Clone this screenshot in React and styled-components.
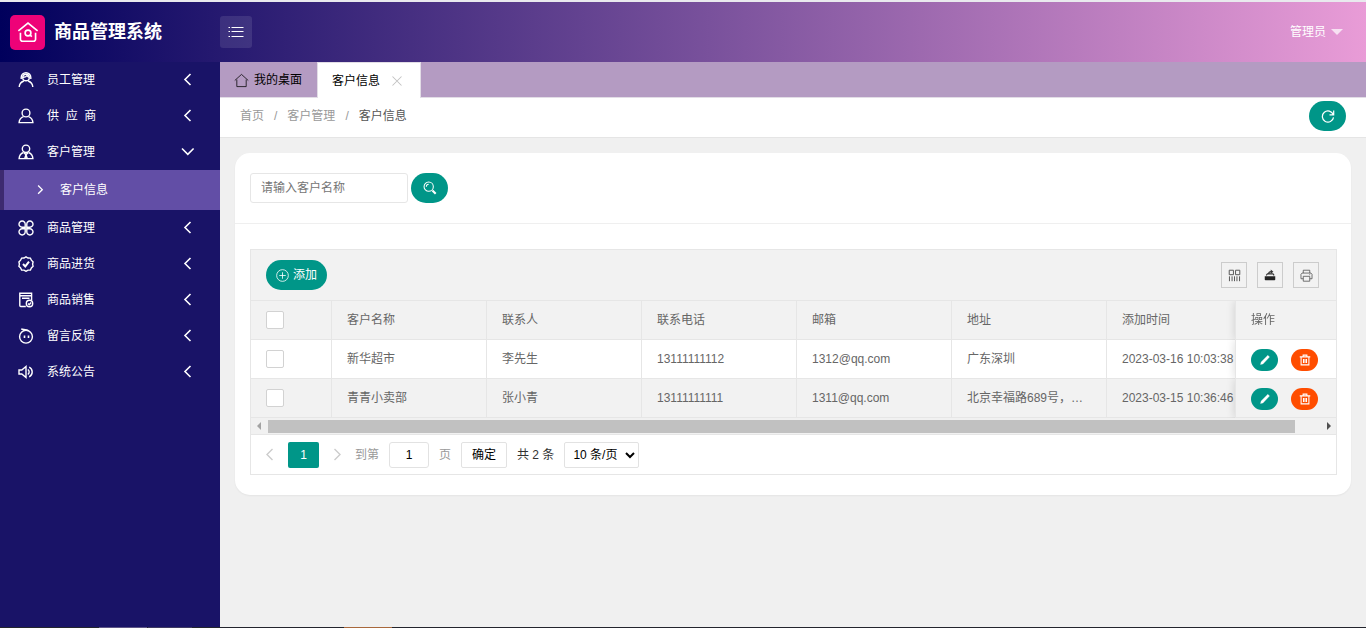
import React, { useState } from "react";
import styled, { createGlobalStyle, css } from "styled-components";

const GlobalStyle = createGlobalStyle`
  * {
    box-sizing: border-box;
  }

  body {
    margin: 0;
    font-family: "Liberation Sans", "Noto Sans CJK SC", sans-serif;
    font-size: 12px;
    line-height: 20px;
    color: #666;
    background: #f0f0f0;
  }

  button, input, select {
    font: inherit;
    margin: 0;
  }

  a {
    color: inherit;
    text-decoration: none;
  }
`;

const Page = styled.div`
  display: flex;
  flex-direction: column;
  min-height: 100vh;
  border-top: 2px solid #e9e9ee;
`;

const Header = styled.header`
  display: flex;
  align-items: center;
  height: 60px;
  padding-right: 23px;
  background: linear-gradient(to right, #00005c, #e99cd7);
`;

const Logo = styled.a`
  display: flex;
  align-items: center;
  gap: 9px;
  width: 220px;
  padding-left: 10px;
  font-size: 18px;
  font-weight: bold;
  color: #fff;
`;

const LogoMark = styled.span`
  display: flex;
  align-items: center;
  justify-content: center;
  width: 35px;
  height: 35px;
  border-radius: 5px;
  background: #ee0278;
`;

const FoldButton = styled.button`
  display: flex;
  align-items: center;
  justify-content: center;
  width: 32px;
  height: 32px;
  padding: 0;
  border: none;
  border-radius: 3px;
  color: #fff;
  background: rgba(255, 255, 255, 0.1);
  cursor: pointer;
`;

const UserButton = styled.button`
  display: flex;
  align-items: center;
  gap: 5px;
  margin-left: auto;
  padding: 0;
  border: none;
  color: #fff;
  background: none;
  cursor: pointer;

  &::after {
    content: "";
    border: 6px solid transparent;
    border-top-color: rgba(255, 255, 255, 0.7);
    border-bottom: none;
  }
`;

const Body = styled.div`
  display: flex;
  flex: 1;
`;

const Sidebar = styled.nav`
  width: 220px;
  flex: none;
  background: #191367;
`;

const MenuItem = styled.button`
  display: flex;
  align-items: center;
  width: 100%;
  height: 36px;
  padding: 0 24px 0 18px;
  border: none;
  color: #fff;
  background: none;
  cursor: pointer;

  span {
    flex: 1;
    padding-left: 13px;
    text-align: left;
    white-space: pre;
  }
`;

const SubItem = styled.a`
  display: flex;
  align-items: center;
  gap: 14px;
  height: 40px;
  padding-left: 30px;
  border-left: 4px solid #3d2a70;
  color: #fff;
  background: #624ea6;
`;

const Main = styled.main`
  flex: 1;
  min-width: 0;
`;

const TabBar = styled.div`
  display: flex;
  height: 36px;
  border-bottom: 1px solid #e2dde6;
  background: #b49bc2;
`;

const Tab = styled.div`
  display: flex;
  align-items: center;
  gap: 5px;
  height: 36px;
  padding: 0 15px 0 14px;
  color: #000;

  ${({ $active }) => $active && css`
    gap: 11px;
    padding-right: 17px;
    border: 1px solid #e2dde6;
    border-bottom: none;
    background: #fff;
  `}
`;

const TabClose = styled.button`
  display: flex;
  padding: 0;
  border: none;
  color: #c2c2c2;
  background: none;
  cursor: pointer;
`;

const Crumbs = styled.div`
  display: flex;
  align-items: center;
  gap: 10px;
  height: 40px;
  padding: 0 20px 3px;
  border-bottom: 1px solid #e5e5e5;
  color: #999;
  background: #fff;

  b {
    font-weight: normal;
    color: #555;
  }
`;

const RoundButton = styled.button`
  display: flex;
  align-items: center;
  justify-content: center;
  gap: 4px;
  min-width: ${({ $small }) => ($small ? "27px" : "37px")};
  height: ${({ $small }) => ($small ? "22px" : "30px")};
  padding: 0 ${({ $small }) => ($small ? "7px" : "10px")};
  border: none;
  border-radius: 15px;
  color: #fff;
  background: ${({ $danger }) => ($danger ? "#ff4d00" : "#009688")};
  cursor: pointer;
`;

const RefreshButton = styled(RoundButton)`
  margin-left: auto;
`;

const Card = styled.section`
  margin: 15px;
  border-radius: 15px;
  background: #fff;
  box-shadow: 0 1px 2px rgba(0, 0, 0, 0.05);
`;

const SearchForm = styled.form`
  display: flex;
  gap: 3px;
  padding: 20px 15px;
  border-bottom: 1px solid #efefef;
`;

const SearchInput = styled.input`
  width: 158px;
  height: 30px;
  padding: 0 10px;
  border: 1px solid #e6e6e6;
  border-radius: 3px;
  outline: none;
  background: #fff;

  &::placeholder {
    color: #757575;
  }
`;

const CardBody = styled.div`
  padding: 25px 14px 20px 15px;
`;

const TableBox = styled.div`
  border: 1px solid #e6e6e6;
`;

const Toolbar = styled.div`
  display: flex;
  align-items: center;
  gap: 10px;
  height: 51px;
  padding: 0 17px 0 15px;
  border-bottom: 1px solid #e6e6e6;
  background: #f2f2f2;
`;

const Tools = styled.div`
  display: flex;
  gap: 10px;
  margin-left: auto;
`;

const ToolButton = styled.button`
  display: flex;
  align-items: center;
  justify-content: center;
  width: 26px;
  height: 26px;
  padding: 0;
  border: 1px solid #ccc;
  color: #555;
  background: none;
  cursor: pointer;
`;

const TableScroll = styled.div`
  overflow: hidden;
`;

const Table = styled.table`
  width: 1112px;
  min-width: 100%;
  table-layout: fixed;
  border-collapse: separate;
  border-spacing: 0;

  th, td {
    height: 39px;
    padding: 0 15px;
    border-right: 1px solid #e6e6e6;
    border-bottom: 1px solid #e6e6e6;
    background: #fff;
    font-weight: normal;
    text-align: left;
    white-space: nowrap;
    overflow: hidden;
    text-overflow: ellipsis;
  }

  th, tr:nth-child(even) td {
    background: #f2f2f2;
  }

  th:nth-last-child(2), td:nth-last-child(2) {
    padding-right: 0;
  }

  th:last-child, td:last-child {
    position: sticky;
    right: 0;
    border-right: none;
    border-left: 1px solid #e6e6e6;
    box-shadow: -1px 0 8px rgba(0, 0, 0, 0.12);
    clip-path: inset(0 0 0 -10px);
  }
`;

const Check = styled.input`
  display: block;
  appearance: none;
  width: 18px;
  height: 18px;
  border: 1px solid #d2d2d2;
  border-radius: 2px;
  background: #fff;

  &:checked {
    border-color: #009688;
    background: #009688;
  }
`;

const RowActions = styled.div`
  display: flex;
  gap: 13px;
  padding-top: 2px;
`;

const ScrollTrack = styled.div`
  display: flex;
  align-items: center;
  height: 17px;
  padding: 0 5px 0 6px;
  border-bottom: 1px solid #e6e6e6;
  background: #f1f1f1;
`;

const ScrollThumb = styled.div`
  flex: 1;
  height: 13px;
  margin: 0 32px 0 7px;
  background: #c1c1c1;
`;

const Arrow = styled.span`
  border: 4px solid transparent;
  ${({ $left }) => ($left
    ? "border-right-color: #a3a3a3; border-left: none;"
    : "border-left-color: #505050; border-right: none;")}
`;

const Pager = styled.div`
  display: flex;
  align-items: center;
  height: 39px;
  padding-left: 11px;
  color: #999;
`;

const PageArrow = styled.button`
  display: flex;
  padding: 0;
  border: none;
  color: #ccc;
  background: none;
`;

const PageCurrent = styled.button`
  width: 31px;
  height: 26px;
  margin: 0 10px;
  padding: 0;
  border: none;
  border-radius: 2px;
  color: #fff;
  background: #009688;
`;

const JumpLabel = styled.label`
  display: flex;
  align-items: center;
  gap: 10px;
  margin: 0 10px;
`;

const JumpInput = styled.input`
  width: 40px;
  height: 26px;
  padding: 0;
  border: 1px solid #e2e2e2;
  border-radius: 3px;
  color: #000;
  text-align: center;
`;

const JumpButton = styled.button`
  width: 46px;
  height: 26px;
  padding: 0;
  border: 1px solid #e2e2e2;
  border-radius: 2px;
  color: #000;
  background: #fff;
`;

const Total = styled.span`
  margin: 0 10px;
  color: #333;
`;

const SizeSelect = styled.select`
  width: 75px;
  height: 26px;
  padding: 0 0 0 4px;
  border: 1px solid #e2e2e2;
  border-radius: 2px;
  color: #000;
  background: #fff;
`;

const BottomStrip = styled.div`
  height: 1px;
  background: linear-gradient(
    to right,
    #23252d 99px, #5e5686 99px 147px, #23252d 147px 148px, #3f3b62 148px 192px,
    #23252d 192px 344px, #a8683c 344px 392px, #23252d 392px
  );
`;

// 16 unit line icons
const icons = {
  staff: (
    <>
      <circle cx="8" cy="5.5" r="3.300" />
      <path d="M3.200 7V5.500a4.800 4.800 0 0 1 9.600 0V7" />
      <path d="M4.800 5.200c2 .2 3.600-.5 4.200-1.700.5 1 1.300 1.600 2.300 1.700" />
      <path d="M1.200 15c.2-3.200 1.900-5 4.600-6M14.800 15c-.2-3.200-1.900-5-4.600-6" />
    </>
  ),
  user: (
    <>
      <circle cx="8" cy="5" r="3.900" />
      <path d="M5.500 8.600C3 9.400 1.300 11.500 1.100 14.600h13.800c-.2-3.100-1.900-5.200-4.400-6" />
    </>
  ),
  customer: (
    <>
      <circle cx="8" cy="4.800" r="3.700" />
      <path d="M5.500 8.500C3 9.400 1.300 11.500 1.100 14.600h13.800c-.2-3.100-1.900-5.200-4.400-6.100" />
      <path d="M6 8.800l2 2 2-2M8 10.800l-1.200 3.500h2.400z" />
    </>
  ),
  goods: (
    <>
      <path d="M7.200 7.200H4.200a3.100 3.100 0 1 1 3-3z" />
      <path d="M8.800 7.200h3a3.100 3.100 0 1 0-3-3z" />
      <path d="M7.200 8.800H4.200a3.100 3.100 0 1 0 3 3z" />
      <path d="M8.800 8.800h3a3.100 3.100 0 1 1-3 3z" />
    </>
  ),
  purchase: (
    <>
      <path d="M8 .8l2 1.200 2.400.1 1 2.100 1.700 1.700-.5 2.200.5 2.200-1.700 1.600-1 2.100-2.400.1-2 1.200-2-1.200-2.400-.1-1-2.100L.9 10.300l.5-2.200-.5-2.200 1.700-1.700 1-2.100L6 2z" />
      <path d="M5 8l2.300 2.400L11 5.700" strokeWidth="2" />
    </>
  ),
  sale: (
    <>
      <path d="M13.600 8V1.300H1.800v12.200a1 1 0 0 0 1 1h5M1.800 3.700h11.800M4 6.200h7.500" />
      <circle cx="11.500" cy="11.500" r="3.200" />
      <path d="M10 11.500l1.200 1.200 2-2.200" />
    </>
  ),
  message: (
    <>
      <circle cx="8" cy="8.700" r="6.400" />
      <path d="M3.200.9c1.600.9 4.200.3 6.800 1.600" />
      <path d="M6.500 7.500v2.400M10.500 7.500v2.400" strokeWidth="1.600" />
    </>
  ),
  notice: (
    <>
      <path d="M1 6v4h2.800L8 13.500v-11L3.800 6z" />
      <path d="M9.800 5.500a3 3 0 0 1 0 5M11.200 3.200c4 2 4 7.600 0 9.600" />
    </>
  ),
  left: <path d="M10.500 2L5 7.500l5.500 5.500" />,
  right: <path d="M5.500 2L11 7.500 5.500 13" />,
  down: <path d="M2 4.500l5.800 5.800 5.800-5.800" />,
  close: <path d="M2 2l12 12M14 2L2 14" />,
  home: <path d="M.8 8L8 1.500 15.200 8M3 7v7.500h10V7" />,
  shop: (
    <>
      <path d="M1 7.200L8 1.500l7 5.700M2.500 8.500v4.700a1.500 1.500 0 0 0 1.500 1.500h8a1.500 1.500 0 0 0 1.500-1.500V8.500" />
      <circle cx="8" cy="8.700" r="2.100" />
      <path d="M9.500 10.200l1.300 1.200" />
    </>
  ),
  list: <path d="M3.500 3.500H15.500M3.500 7.500H15.500M3.500 12.500H15.500M.5 3.500h1.500M.5 7.500h1.500M.5 12.500h1.500" />,
  refresh: <path d="M14 6.500A6.400 6.400 0 1 0 14.300 9.500M14.500 1.800v4.900h-4.800" />,
  search: (
    <>
      <circle cx="6.500" cy="6.500" r="5.300" />
      <path d="M3.800 6.500a2.800 2.800 0 0 1 2.700-2.800" />
      <path d="M10.800 10.800l3.700 3.700" strokeWidth="2.400" />
    </>
  ),
  add: (
    <>
      <circle cx="8" cy="8" r="7.200" />
      <path d="M8 4v8M4 8h8" />
    </>
  ),
  edit: <path d="M2 14l.8-3.300L11.800 1.800l2.200 2.200L5.300 13.200z" fill="currentColor" strokeWidth=".4" />,
  trash: <path d="M1 3.800h14M5.500 3.500V1.500h5v2M2.800 4v10.500h10.400V4M6 6.500V12M8 6.500V12M10 6.500V12" />,
  columns: (
    <path d="M1.500 1.500h5.200v5.500H1.500zM9.300 1.500h5.200v5.500H9.300zM1.800 9v6M5 9v6M8 9v6M11 9v6M14.200 9v6" />
  ),
  output: (
    <>
      <path d="M1 9.500h14v4.500a1 1 0 0 1-1 1H2a1 1 0 0 1-1-1z" fill="#222" stroke="none" />
      <path d="M3 8.500l1.500-2h7.500l1.500 2M6 7c0-2.500 1.500-3.500 4-3.500" stroke="#333" />
      <path d="M9 .8L12.500 3.500 9 6.200z" fill="#333" stroke="none" />
    </>
  ),
  print: (
    <path d="M4 5V1.500h8V5M4 12H1.200V6.500L2.500 5h11l1.300 1.500V12H12M4 9h8v6H4zM11.500 7h1" />
  ),
};

const Icon = ({ name, size = 16, weight = 1.4 }) => (
  <svg
    width={size}
    height={size}
    viewBox="0 0 16 16"
    fill="none"
    stroke="currentColor"
    strokeWidth={weight}
    aria-hidden="true"
  >
    {icons[name]}
  </svg>
);

const menu = [
  { icon: "staff", label: "员工管理" },
  { icon: "user", label: "供  应  商" },
  { icon: "customer", label: "客户管理", children: ["客户信息"] },
  { icon: "goods", label: "商品管理" },
  { icon: "purchase", label: "商品进货" },
  { icon: "sale", label: "商品销售" },
  { icon: "message", label: "留言反馈" },
  { icon: "notice", label: "系统公告" },
];

const columns = ["客户名称", "联系人", "联系电话", "邮箱", "地址", "添加时间"];

const customers = [
  ["新华超市", "李先生", "13111111112", "1312@qq.com", "广东深圳", "2023-03-16 10:03:38"],
  ["青青小卖部", "张小青", "13111111111", "1311@qq.com", "北京幸福路689号，…", "2023-03-15 10:36:46"],
];

const SideMenu = () => {
  const [open, setOpen] = useState("客户管理");

  return (
    <Sidebar>
      {menu.map((item) => (
        <React.Fragment key={item.label}>
          <MenuItem onClick={() => setOpen(open === item.label ? "" : item.label)}>
            <Icon name={item.icon} />
            <span>{item.label}</span>
            <Icon name={open === item.label ? "down" : "left"} weight={1.6} />
          </MenuItem>
          {open === item.label && item.children?.map((child) => (
            <SubItem href="#" key={child}>
              <Icon name="right" size={12} weight={1.8} />
              {child}
            </SubItem>
          ))}
        </React.Fragment>
      ))}
    </Sidebar>
  );
};

const CustomerTable = () => (
  <TableScroll>
    <Table>
      <colgroup>
        <col style={{ width: 81 }} />
        {columns.map((name) => <col key={name} style={{ width: 155 }} />)}
        <col style={{ width: 101 }} />
      </colgroup>
      <thead>
        <tr>
          <th><Check type="checkbox" aria-label="全选" /></th>
          {columns.map((name) => <th key={name}>{name}</th>)}
          <th>操作</th>
        </tr>
      </thead>
      <tbody>
        {customers.map((row) => (
          <tr key={row[0]}>
            <td><Check type="checkbox" aria-label={row[0]} /></td>
            {row.map((value, index) => <td key={index}>{value}</td>)}
            <td>
              <RowActions>
                <RoundButton $small aria-label="编辑"><Icon name="edit" size={12} /></RoundButton>
                <RoundButton $small $danger aria-label="删除"><Icon name="trash" size={12} /></RoundButton>
              </RowActions>
            </td>
          </tr>
        ))}
      </tbody>
    </Table>
  </TableScroll>
);

const App = () => (
  <Page>
    <GlobalStyle />
    <Header>
      <Logo href="#">
        <LogoMark><Icon name="shop" size={22} weight={1.2} /></LogoMark>
        商品管理系统
      </Logo>
      <FoldButton aria-label="折叠菜单"><Icon name="list" weight={1} /></FoldButton>
      <UserButton>管理员</UserButton>
    </Header>
    <Body>
      <SideMenu />
      <Main>
        <TabBar>
          <Tab><Icon name="home" size={15} weight={0.8} />我的桌面</Tab>
          <Tab $active>
            客户信息
            <TabClose aria-label="关闭"><Icon name="close" size={12} /></TabClose>
          </Tab>
        </TabBar>
        <Crumbs>
          <a href="#">首页</a>/<a href="#">客户管理</a>/<b>客户信息</b>
          <RefreshButton aria-label="刷新"><Icon name="refresh" size={14} /></RefreshButton>
        </Crumbs>
        <Card>
          <SearchForm onSubmit={(e) => e.preventDefault()}>
            <SearchInput placeholder="请输入客户名称" aria-label="客户名称" />
            <RoundButton aria-label="搜索"><Icon name="search" size={14} weight={1.2} /></RoundButton>
          </SearchForm>
          <CardBody>
            <TableBox>
              <Toolbar>
                <RoundButton><Icon name="add" size={13} weight={1} />添加</RoundButton>
                <Tools>
                  <ToolButton aria-label="筛选列"><Icon name="columns" size={13} weight={1.2} /></ToolButton>
                  <ToolButton aria-label="导出"><Icon name="output" size={12} /></ToolButton>
                  <ToolButton aria-label="打印"><Icon name="print" size={13} weight={1} /></ToolButton>
                </Tools>
              </Toolbar>
              <CustomerTable />
              <ScrollTrack>
                <Arrow $left />
                <ScrollThumb />
                <Arrow />
              </ScrollTrack>
              <Pager>
                <PageArrow aria-label="上一页"><Icon name="left" /></PageArrow>
                <PageCurrent>1</PageCurrent>
                <PageArrow aria-label="下一页"><Icon name="right" /></PageArrow>
                <JumpLabel>到第<JumpInput defaultValue="1" />页</JumpLabel>
                <JumpButton>确定</JumpButton>
                <Total>共 2 条</Total>
                <SizeSelect aria-label="每页条数">
                  <option>10 条/页</option>
                  <option>20 条/页</option>
                </SizeSelect>
              </Pager>
            </TableBox>
          </CardBody>
        </Card>
      </Main>
    </Body>
    <BottomStrip />
  </Page>
);

export default App;
